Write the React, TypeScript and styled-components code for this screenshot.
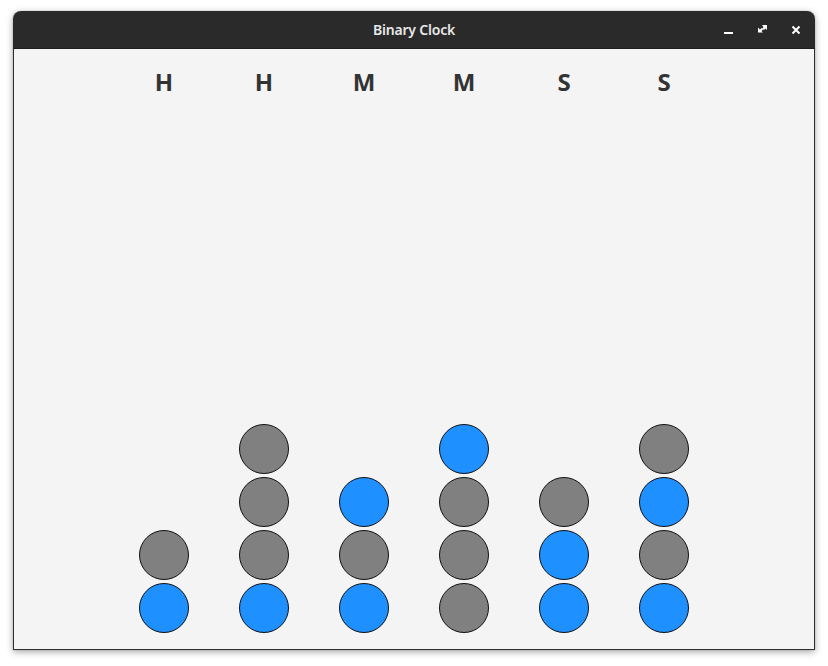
import React from "react";
import styled, { createGlobalStyle } from "styled-components";

const Global = createGlobalStyle`
  html, body { margin: 0; padding: 0; background: #ffffff; }
  body { font-family: "Noto Sans", "Open Sans", sans-serif; }
`;

const Page = styled.div`
  width: 828px;
  height: 666px;
  padding: 11px 13px 0 13px;
  box-sizing: border-box;
`;

const Window = styled.div`
  width: 802px;
  height: 639px;
  display: flex;
  flex-direction: column;
  border-radius: 8px 8px 0 0;
  box-shadow: 0 2px 7px rgba(0, 0, 0, 0.35), 0 0 1px rgba(0, 0, 0, 0.4);
  overflow: hidden;
`;

const TitleBar = styled.div`
  height: 37px;
  flex: none;
  background: #2a2a2a;
  display: grid;
  grid-template-columns: 1fr auto 1fr;
  align-items: center;
  border-bottom: 1px solid #1c1c1c;
`;

const Title = styled.div`
  grid-column: 2;
  color: #e8e8e8;
  font-family: "Noto Sans", "Open Sans", sans-serif;
  font-weight: 600;
  font-size: 14px;
  letter-spacing: -0.2px;
`;

const Controls = styled.div`
  grid-column: 3;
  justify-self: end;
  display: flex;
  gap: 10px;
  padding-right: 7px;
`;

const CtrlButton = styled.div`
  width: 24px;
  height: 24px;
  display: flex;
  align-items: center;
  justify-content: center;
`;

const Body = styled.div`
  flex: 1;
  background: #f4f4f4;
  border: 1px solid #2e2e2e;
  border-top: none;
  display: flex;
  justify-content: center;
  padding: 21px 0 16px 0;
`;

const Column = styled.div`
  width: 100px;
  display: flex;
  flex-direction: column;
  align-items: center;
`;

const Label = styled.div`
  font-family: "Noto Sans", "Open Sans", sans-serif;
  font-weight: 700;
  font-size: 24px;
  line-height: 24px;
  color: #333333;
`;

const Bits = styled.div`
  margin-top: auto;
  display: flex;
  flex-direction: column;
  gap: 3px;
`;

const Bit = styled.div<{ $on: boolean }>`
  width: 50px;
  height: 50px;
  box-sizing: border-box;
  border-radius: 50%;
  border: 1px solid #111111;
  background: ${(p) => (p.$on ? "#1e90ff" : "#808080")};
`;

const columns: { label: string; bits: boolean[] }[] = [
  { label: "H", bits: [false, true] },
  { label: "H", bits: [false, false, false, true] },
  { label: "M", bits: [true, false, true] },
  { label: "M", bits: [true, false, false, false] },
  { label: "S", bits: [false, true, true] },
  { label: "S", bits: [false, true, false, true] },
];

export default function App() {
  return (
    <>
      <Global />
      <Page>
        <Window>
          <TitleBar>
            <Title>Binary Clock</Title>
            <Controls>
              <CtrlButton>
                <svg width="16" height="16" viewBox="0 0 16 16">
                  <rect x="4" y="10" width="9" height="2" fill="#ffffff" />
                </svg>
              </CtrlButton>
              <CtrlButton>
                <svg width="16" height="16" viewBox="0 0 16 16">
                  <path d="M8 3 H13 V8 L11.5 6.5 L10 8 L8 6.5 L9.5 5 Z" fill="#ffffff" />
                  <path d="M4 6 V11 H9 L7.5 9.5 L9 8 L7.5 6.5 L6 8 Z" fill="#ffffff" transform="translate(0 -0.5)" />
                </svg>
              </CtrlButton>
              <CtrlButton>
                <svg width="16" height="16" viewBox="0 0 16 16">
                  <path d="M4.5 4.5 L11.5 11.5 M11.5 4.5 L4.5 11.5" stroke="#ffffff" strokeWidth="2" strokeLinecap="butt" />
                </svg>
              </CtrlButton>
            </Controls>
          </TitleBar>
          <Body>
            {columns.map((c, i) => (
              <Column key={i}>
                <Label>{c.label}</Label>
                <Bits>
                  {c.bits.map((b, j) => (
                    <Bit key={j} $on={b} />
                  ))}
                </Bits>
              </Column>
            ))}
          </Body>
        </Window>
      </Page>
    </>
  );
}
